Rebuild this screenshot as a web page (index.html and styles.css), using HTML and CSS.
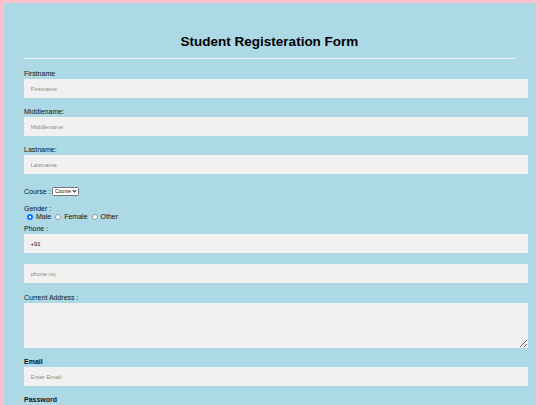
FILE: index.html
```html
<!DOCTYPE html>
<html>
<head>
  <meta charset="utf-8">
  <title>Student Registeration Form</title>
  <link rel="stylesheet" href="styles.css">
</head>
<body>
  <form class="container">
    <h1 class="title">Student Registeration Form</h1>
    <hr class="divider">

    <label class="label" for="firstname">Firstname</label>
    <input type="text" id="firstname" class="input" placeholder="Firstname">

    <label class="label" for="middlename">Middlename:</label>
    <input type="text" id="middlename" class="input" placeholder="Middlename">

    <label class="label" for="lastname">Lastname:</label>
    <input type="text" id="lastname" class="input" placeholder="Lastname">

    <div class="course-row">
      <span>Course :</span>
      <span class="select-wrap">
        <select class="select">
          <option>Course</option>
          <option>BCA</option>
          <option>BBA</option>
          <option>B.Tech</option>
        </select>
      </span>
    </div>

    <div class="label gender-label">Gender :</div>
    <div class="radio-row">
      <input type="radio" name="gender" id="male" class="radio" checked>
      <label for="male" class="radio-text">Male</label>
      <input type="radio" name="gender" id="female" class="radio">
      <label for="female" class="radio-text">Female</label>
      <input type="radio" name="gender" id="other" class="radio">
      <label for="other" class="radio-text">Other</label>
    </div>

    <label class="label phone-label" for="code">Phone :</label>
    <input type="text" id="code" class="input" value="+91">
    <input type="text" class="input phone" placeholder="phone no.">

    <label class="label address-label" for="address">Current Address :</label>
    <textarea id="address" class="textarea"></textarea>

    <label class="label bold" for="email">Email</label>
    <input type="text" id="email" class="input" placeholder="Enter Email">

    <label class="label bold" for="psw">Password</label>
    <input type="password" id="psw" class="input" placeholder="Enter Password">

    <label class="label bold" for="psw-repeat">Re-type Password</label>
    <input type="password" id="psw-repeat" class="input" placeholder="Retype Password">

    <hr class="divider">
    <button type="submit" class="button">Register</button>
  </form>
</body>
</html>
```

FILE: styles.css
```css
* {
  box-sizing: border-box;
}

body {
  margin: 0;
  padding: 3px 4px 0 4px;
  background: pink;
  font-family: "Liberation Sans", Arial, sans-serif;
  color: #111;
}

.container {
  display: block;
  background: lightblue;
  padding: 30px 21px 30px 20px;
}

.title {
  font-size: 13.5px;
  line-height: 18px;
  font-weight: bold;
  text-align: center;
  color: #000;
  margin: 0 0 7px 0;
}

.divider {
  border: 0;
  border-top: 1px solid #f1f1f1;
  height: 0;
  margin: 0 0 9.5px 0;
}

.label {
  display: block;
  font-size: 7px;
  line-height: 10px;
  margin-bottom: 0.5px;
}

.label.bold {
  font-weight: bold;
}

.input {
  display: block;
  box-sizing: content-box;
  width: 100%;
  height: 19px;
  padding: 0 6.5px;
  margin: 0 0 8.5px 0;
  border: none;
  background: #f1f1f1;
  font-family: "Liberation Sans", Arial, sans-serif;
  font-size: 6px;
  color: #111;
  outline: none;
}

.input::placeholder {
  color: #8a8a8a;
}

.phone {
  margin-top: 11px;
}

.course-row {
  display: flex;
  align-items: center;
  gap: 2px;
  height: 10px;
  font-size: 7px;
  margin: 12.6px 0 8px 0;
}

.select-wrap {
  position: relative;
  display: inline-block;
  height: 9px;
}

.select {
  appearance: none;
  -webkit-appearance: none;
  display: block;
  width: 27px;
  height: 9px;
  padding: 0 0 0 1.5px;
  border: 1px solid #767676;
  border-radius: 1.5px;
  background: #fff;
  font-family: "Liberation Sans", Arial, sans-serif;
  font-size: 5px;
  line-height: 7px;
  color: #111;
}

/* little chevron over the select */
.select-wrap::after {
  content: "";
  position: absolute;
  right: 3px;
  top: 2.2px;
  width: 2px;
  height: 2px;
  border-right: 1px solid #222;
  border-bottom: 1px solid #222;
  transform: rotate(45deg);
  pointer-events: none;
}

.gender-label {
  line-height: 8px;
  margin-bottom: 0;
}

.radio-row {
  display: flex;
  align-items: center;
  height: 8px;
  font-size: 7px;
  padding-left: 3px;
}

.radio {
  appearance: none;
  -webkit-appearance: none;
  width: 6px;
  height: 6px;
  margin: 0 3px 0 0;
  border: 0.7px solid #9a9a9a;
  border-radius: 50%;
  background: #fff;
}

.radio:checked {
  border: none;
  background: radial-gradient(circle, #fff 0 0.8px, #0075ff 1.3px);
}

.radio-text {
  margin-right: 4px;
}

.phone-label {
  margin-top: 3px;
}

.address-label {
  margin-top: 9.5px;
}

.textarea {
  display: block;
  box-sizing: content-box;
  width: 100%;
  height: 45px;
  padding: 0 6.5px;
  margin: 0 0 8.5px 0;
  border: none;
  background: #f1f1f1;
  font-size: 6px;
}

.button {
  background: #04aa6d;
  color: #fff;
  border: none;
  padding: 8px 12px;
  width: 100%;
  font-size: 9px;
}
```
